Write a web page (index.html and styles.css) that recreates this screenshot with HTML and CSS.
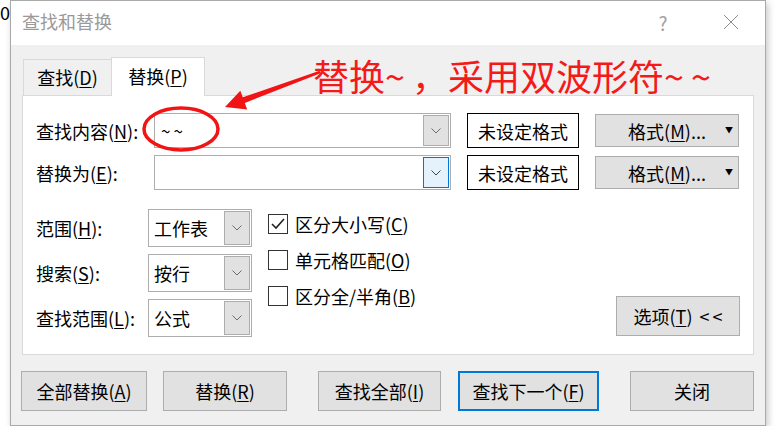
FILE: index.html
```html
<!DOCTYPE html>
<html>
<head>
    <meta charset="utf-8">
    <title>查找和替换</title>
    <link rel="stylesheet" href="styles.css">
</head>
<body>

    <!-- sheet cell peeking out behind the dialog -->
    <div class="sheet_cell">0</div>

    <div class="dialog">

        <!-- title bar -->
        <div class="titlebar">
            <span class="title">查找和替换</span>
            <span class="tb_btn">?</span>
            <span class="tb_btn">
                <svg width="16" height="16" viewBox="0 0 16 16">
                    <path d="M1 1 L15 15 M15 1 L1 15" stroke="#8c8c8c" stroke-width="1" fill="none"/>
                </svg>
            </span>
        </div>

        <div class="dlg_body">

            <!-- tabs -->
            <div class="tabs">
                <div class="tab">查找(<u>D</u>)</div>
                <div class="tab active">替换(<u>P</u>)</div>
            </div>

            <div class="panel">

                <!-- find / replace rows -->
                <div class="top_grid">
                    <div class="label">查找内容(<u>N</u>):</div>
                    <div class="combo">
                        <span class="combo_text tildes">~~</span>
                        <span class="drop">
                            <svg width="10" height="6" viewBox="0 0 10 6"><path d="M0.5 0.5 L5 5 L9.5 0.5" fill="none" stroke="#6d6d6d"/></svg>
                        </span>
                    </div>
                    <div class="fmt_box">未设定格式</div>
                    <div class="btn fmt_btn"><span>格式(<u>M</u>)...</span><span class="caret">▼</span></div>

                    <div class="label">替换为(<u>E</u>):</div>
                    <div class="combo">
                        <span class="combo_text"></span>
                        <span class="drop focus">
                            <svg width="10" height="6" viewBox="0 0 10 6"><path d="M0.5 0.5 L5 5 L9.5 0.5" fill="none" stroke="#444"/></svg>
                        </span>
                    </div>
                    <div class="fmt_box">未设定格式</div>
                    <div class="btn fmt_btn"><span>格式(<u>M</u>)...</span><span class="caret">▼</span></div>
                </div>

                <!-- options -->
                <div class="lower">
                    <div class="opt_grid">
                        <div class="label">范围(<u>H</u>):</div>
                        <div class="combo small">
                            <span class="combo_text">工作表</span>
                            <span class="drop"><svg width="10" height="6" viewBox="0 0 10 6"><path d="M0.5 0.5 L5 5 L9.5 0.5" fill="none" stroke="#6d6d6d"/></svg></span>
                        </div>
                        <div class="label">搜索(<u>S</u>):</div>
                        <div class="combo small">
                            <span class="combo_text">按行</span>
                            <span class="drop"><svg width="10" height="6" viewBox="0 0 10 6"><path d="M0.5 0.5 L5 5 L9.5 0.5" fill="none" stroke="#6d6d6d"/></svg></span>
                        </div>
                        <div class="label">查找范围(<u>L</u>):</div>
                        <div class="combo small">
                            <span class="combo_text">公式</span>
                            <span class="drop"><svg width="10" height="6" viewBox="0 0 10 6"><path d="M0.5 0.5 L5 5 L9.5 0.5" fill="none" stroke="#6d6d6d"/></svg></span>
                        </div>
                    </div>

                    <div class="checks">
                        <div class="check">
                            <span class="box">
                                <svg width="18" height="18" viewBox="0 0 18 18"><path d="M3 9 L7 13 L15 4" fill="none" stroke="#222" stroke-width="1.6"/></svg>
                            </span>
                            <span>区分大小写(<u>C</u>)</span>
                        </div>
                        <div class="check"><span class="box"></span><span>单元格匹配(<u>O</u>)</span></div>
                        <div class="check"><span class="box"></span><span>区分全/半角(<u>B</u>)</span></div>
                    </div>

                    <div class="btn opt_btn">选项(<u>T</u>)&nbsp;<span class="chev">&lt;&lt;</span></div>
                </div>

            </div>

            <!-- action buttons -->
            <div class="actions">
                <div class="btn b_all">全部替换(<u>A</u>)</div>
                <div class="btn b_rep">替换(<u>R</u>)</div>
                <div class="btn b_findall">查找全部(<u>I</u>)</div>
                <div class="btn b_next">查找下一个(<u>F</u>)</div>
                <div class="btn b_close">关闭</div>
            </div>

        </div>
    </div>

    <!-- red annotation drawn on top of the screenshot -->
    <svg class="marks" width="776" height="436" viewBox="0 0 776 436">
        <ellipse cx="181" cy="129" rx="37" ry="21" fill="none" stroke="#f21414" stroke-width="3.5"/>
        <polygon points="225,107 240.3,90.7 242.8,97.3 319.6,70.8 320.4,73.2 244.8,102.9 247.2,109.5" fill="#f21414"/>
    </svg>
    <div class="note">替换<span class="tl">~</span>，采用双波形符<span class="tl">~~</span></div>

</body>
</html>
```

FILE: styles.css
```css
/* GLOBAL */
*       {   box-sizing: border-box; }

body    {   margin: 0;
            background-color: white;
            color: black;
            font-family: "Noto Sans CJK SC", "Noto Sans", sans-serif;
            font-size: 18px;
            display: flex;
        }

u       {   text-decoration-thickness: 1px; text-underline-offset: 2px; }

.sheet_cell { width: 10px; font-size: 18px; line-height: 22px; padding-top: 1px; }

/* DIALOG FRAME */
.dialog {   width: 756px;
            height: 426px;
            border: 1px solid #a9a9a9;
            background-color: #f0f0f0;
            box-shadow: 2px 3px 7px rgba(0, 0, 0, 0.22);
            display: flex;
            flex-direction: column;
        }

.titlebar { height: 44px; background: white; display: flex; align-items: center; padding-left: 11px; }
.title    { color: #9a9a9a; flex: 1; line-height: 24px; margin-top: -4px; }
.tb_btn   { width: 68px; height: 44px; display: flex; align-items: center; justify-content: center;
            color: #a0a0a0; font-size: 19px; margin-top: -2px; }

.dlg_body { padding: 12px 11px 0 11px; }

/* TABS */
.tabs     { display: flex; padding-left: 1px; height: 38px; align-items: flex-end; }
.tab      { width: 89px; height: 36px; border: 1px solid #d9d9d9; border-bottom: none;
            display: flex; align-items: center; justify-content: center; padding-bottom: 1px; }
.tab.active { width: 94px; height: 39px; margin-left: -1px; margin-bottom: -1px;
              background: white; position: relative; z-index: 1; padding-bottom: 3px; }

.panel    { height: 260px; background: white; border: 1px solid #d9d9d9; padding: 17px 13px 0 13px; }

/* FORM */
.label    { display: flex; align-items: center; white-space: nowrap; }

.top_grid { display: grid;
            grid-template-columns: 102px 297px 112px 144px;
            grid-template-rows: 35px 35px;
            column-gap: 16px;
            row-gap: 7px;
          }

.combo    { border: 1px solid #adadad; background: white; display: flex; align-items: stretch;
            padding: 1px; }
.combo_text { flex: 1; display: flex; align-items: center; padding-left: 5px; }
.tildes   { letter-spacing: 3px; font-size: 17px; }
.drop     { width: 26px; background: #e1e1e1; border: 1px solid #adadad;
            display: flex; align-items: center; justify-content: center; }
.drop.focus { background: #e5f1fb; border-color: #0078d7; }

.fmt_box  { border: 1px solid black; display: flex; align-items: center; justify-content: center; }

.btn      { background: #e1e1e1; border: 1px solid #adadad;
            display: flex; align-items: center; justify-content: center; white-space: nowrap; }
.fmt_btn  { height: 33px; align-self: center; position: relative; }
.caret    { position: absolute; right: 5px; top: 10px; font-size: 8px; line-height: 10px; }

.lower    { display: flex; margin-top: 19px; }
.opt_grid { display: grid; grid-template-columns: 112px 104px; grid-template-rows: 38px 38px 38px; row-gap: 7px; }
.combo.small .combo_text { padding-left: 4px; }

.checks   { margin-left: 16px; padding-top: 5px; display: flex; flex-direction: column; gap: 16px; }
.check    { height: 20px; display: flex; align-items: center; gap: 7px; white-space: nowrap; }
.box      { width: 20px; height: 20px; border: 1px solid #333; background: white;
            display: flex; align-items: center; justify-content: center; }

.opt_btn  { margin-left: auto; align-self: flex-end; width: 124px; height: 40px; margin-bottom: 1px; }
.chev     { letter-spacing: 3px; margin-left: 3px; margin-right: -3px; }

/* ACTION BUTTONS */
.actions  { display: flex; margin-top: 16px; margin-left: -1px; }
.actions .btn { height: 40px; }
.b_all     { width: 126px; }
.b_rep     { width: 124px; margin-left: 16px; }
.b_findall { width: 123px; margin-left: 31px; }
.b_next    { width: 141px; margin-left: 17px; border: 2px solid #0078d7; }
.b_close   { width: 124px; margin-left: 31px; }

/* ANNOTATION */
.marks    { position: absolute; left: 0; top: 0; pointer-events: none; }
.note     { position: absolute; left: 313px; top: 57px; color: #f51a1a;
            font-size: 36px; line-height: 36px; white-space: nowrap; }
.tl       { letter-spacing: 7px; }
```
